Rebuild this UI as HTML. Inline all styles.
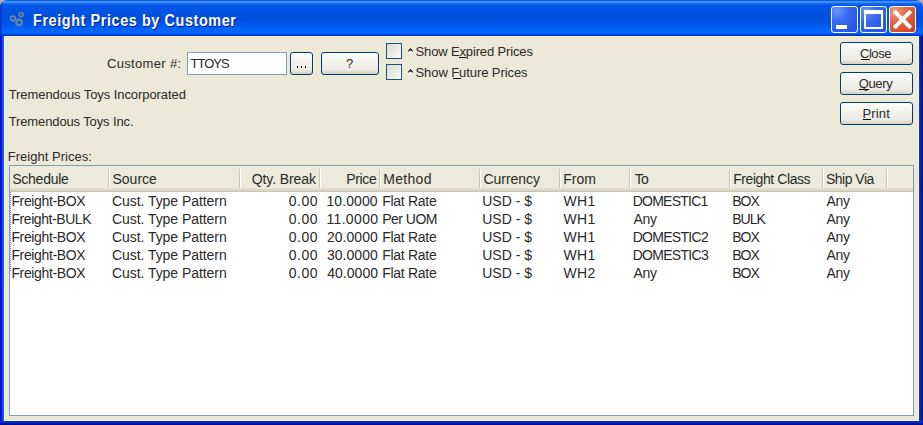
<!DOCTYPE html>
<html><head><meta charset="utf-8">
<style>
*{margin:0;padding:0;box-sizing:border-box}
html,body{width:923px;height:425px;overflow:hidden;background:#b0ad98}
body{position:relative;font-family:"Liberation Sans",sans-serif;color:#2a2a2a}
.a{position:absolute}
.t{position:absolute;white-space:nowrap}
#win{position:absolute;left:0;top:0;width:923px;height:425px;border-radius:7px 7px 0 0;overflow:hidden;background:#ece9d8}
#title{position:absolute;left:0;top:0;width:923px;height:36px;
 background:linear-gradient(to bottom,#0a5ae6 0px,#0a5ae6 1px,#3d90ff 1px,#3d90ff 2px,#3888fa 2px,#3888fa 3px,#1a6cf5 3px,#1a6cf5 4px,#0a60ee 4px,#0a60ee 5px,#0458e8 5px,#0152e0 13px,#0050df 20px,#0055e8 24px,#005cf5 27px,#0064fc 29px,#0066ff 33px,#0060f8 33px,#0060f8 34px,#0048d8 34px,#0048d8 35px,#0038c8 35px,#0038c8 36px)}
#tl{position:absolute;left:0;top:0;width:4px;height:36px;background:linear-gradient(to right,#0020c8,#0040d8 1px,rgba(0,80,224,0) 3px)}
#lf{position:absolute;left:0;top:36px;width:4px;height:389px;background:linear-gradient(to right,#0011d6 0,#0011d6 1px,#0019d9 1px,#0019d9 2px,#1a4ae0 2px,#1a4ae0 3px,#0c5cf0 3px,#0c5cf0 4px)}
#rf{position:absolute;left:919px;top:36px;width:4px;height:389px;background:linear-gradient(to right,#0035e0 0,#0035e0 1px,#0028c8 1px,#0028c8 2px,#0018a0 2px,#0018a0 3px,#001088 3px,#001088 4px)}
#bf{position:absolute;left:0;top:421px;width:923px;height:4px;background:linear-gradient(to bottom,#0035e0 0,#0035e0 1px,#0028c8 1px,#0028c8 2px,#0018a0 2px,#0018a0 3px,#001088 3px,#001088 4px)}
#client{position:absolute;left:4px;top:36px;width:915px;height:385px;background:#ece9d8;border:1px solid #fcf5dc}
.tbtn{position:absolute;top:6px;width:27px;height:27px;border:1px solid #fff;border-radius:3px;
 background:radial-gradient(circle at 20% 15%,#6e98f8 0,#3a6cf0 35%,#2a5de8 70%,#2250e0 100%)}
.btn{position:absolute;border:1px solid #003c74;border-radius:3px;background:linear-gradient(to bottom,#ffffff 0,#f7f7f3 20%,#ecebe5 80%,#e0dcd0 90%,#d6d0c5 100%)}
.cb{position:absolute;left:386px;width:16px;height:16px;border:1px solid #1c5180;background:linear-gradient(135deg,#dcdcd5 0,#eeeee8 60%,#fbfbf8 100%)}
.u{position:absolute;height:1px;background:#000}
#tbl{position:absolute;left:9px;top:165px;width:905px;height:251px;border:1px solid #7f9db9;background:#fff}
#hdr{position:absolute;left:0;top:0;width:903px;height:26px;background:linear-gradient(to bottom,#ebeadb 0,#ebeadb 22px,#e5e2d0 22px,#e5e2d0 23px,#dedbc6 23px,#dedbc6 24px,#d6d2bd 24px,#d6d2bd 25px,#cbc7b4 25px,#cbc7b4 26px)}
.sep{position:absolute;top:3px;width:2px;height:19px;background:linear-gradient(to right,#cac6b2 0,#cac6b2 1px,#fff 1px,#fff 2px)}
.dot{position:absolute;width:1px;height:2px;background:#000}
</style></head><body>
<div id="win">
 <div id="title"></div>
 <div id="tl"></div>
 <div id="client"></div>
 <div id="lf"></div>
 <div id="rf"></div>
 <div id="bf"></div>
 <svg class="a" style="left:6px;top:8px" width="24" height="24" viewBox="6 8 24 24">
  <g fill="none" stroke="#6a8a9e" opacity="0.95">
   <circle cx="12.95" cy="18.4" r="2.3" stroke-width="1.9"/>
   <circle cx="21.1" cy="14.6" r="1.95" stroke-width="1.7"/>
   <circle cx="19.1" cy="22.4" r="2.8" stroke-width="2.1"/>
  </g>
 </svg>
 <div class="tbtn" style="left:831px"><div class="a" style="left:4px;top:18px;width:11px;height:4px;background:#fff"></div></div>
 <div class="tbtn" style="left:860px"><div class="a" style="left:3px;top:3px;width:19px;height:19px;border:2px solid #fff;border-top-width:4px"></div></div>
 <div class="tbtn" style="left:889px;background:radial-gradient(circle at 20% 15%,#ec9a7c 0,#e2664a 40%,#d8502c 75%,#c83a14 100%)">
  <svg class="a" style="left:0;top:0" width="25" height="25" viewBox="0 0 25 25"><g stroke="#fff" stroke-width="4"><line x1="4.2" y1="4.2" x2="20.8" y2="20.8"/><line x1="20.8" y1="4.2" x2="4.2" y2="20.8"/></g></svg>
 </div>

 <div class="a" style="left:187px;top:52px;width:100px;height:23px;border:1px solid #7f9db9;background:#fff"></div>
 <div class="btn" style="left:290px;top:52px;width:23px;height:23px"></div>
 <div class="dot" style="left:297px;top:66px"></div><div class="dot" style="left:301px;top:66px"></div><div class="dot" style="left:305px;top:66px"></div>
 <div class="btn" style="left:321px;top:52px;width:58px;height:23px"></div>
 <div class="cb" style="top:43px"></div>
 <div class="cb" style="top:64px"></div>
 <div class="btn" style="left:840px;top:42px;width:73px;height:23px"></div>
 <div class="btn" style="left:840px;top:72px;width:73px;height:23px"></div>
 <div class="btn" style="left:840px;top:102px;width:73px;height:23px"></div>
 <svg class="a" style="left:408px;top:48px" width="5" height="6" shape-rendering="crispEdges">
  <rect x="2" y="0" width="1" height="1" fill="#383838"/><rect x="1" y="1" width="3" height="1" fill="#282828"/>
  <rect x="0" y="2" width="5" height="1" fill="#484848"/><rect x="2" y="2" width="1" height="1" fill="#686868"/>
  <rect x="0" y="3" width="1" height="1" fill="#8a8a8a"/><rect x="1" y="3" width="3" height="1" fill="#e4e4e4"/><rect x="4" y="3" width="1" height="1" fill="#8a8a8a"/>
  <rect x="0" y="4" width="5" height="1" fill="#fcfcfc"/><rect x="0" y="5" width="5" height="1" fill="#ececec"/>
 </svg>
 <svg class="a" style="left:408px;top:69px" width="5" height="6" shape-rendering="crispEdges">
  <rect x="2" y="0" width="1" height="1" fill="#383838"/><rect x="1" y="1" width="3" height="1" fill="#282828"/>
  <rect x="0" y="2" width="5" height="1" fill="#484848"/><rect x="2" y="2" width="1" height="1" fill="#686868"/>
  <rect x="0" y="3" width="1" height="1" fill="#8a8a8a"/><rect x="1" y="3" width="3" height="1" fill="#e4e4e4"/><rect x="4" y="3" width="1" height="1" fill="#8a8a8a"/>
  <rect x="0" y="4" width="5" height="1" fill="#fcfcfc"/><rect x="0" y="5" width="5" height="1" fill="#ececec"/>
 </svg>
 <div class="u" style="left:459px;top:57px;width:7px"></div>
 <div class="u" style="left:453px;top:78px;width:8px"></div>
 <div class="u" style="left:861px;top:59px;width:9px"></div>
 <div class="u" style="left:859px;top:89px;width:10px"></div>
 <div class="u" style="left:863px;top:119px;width:8px"></div>

 <div id="tbl">
  <div class="a" style="left:0;top:26px;width:1px;height:80px;background:repeating-linear-gradient(to bottom,#8a8a8a 0,#8a8a8a 1px,transparent 1px,transparent 2px)"></div>
  <div id="hdr">
   <div class="sep" style="left:98px"></div>
   <div class="sep" style="left:229px"></div>
   <div class="sep" style="left:309px"></div>
   <div class="sep" style="left:369px"></div>
   <div class="sep" style="left:469px"></div>
   <div class="sep" style="left:549px"></div>
   <div class="sep" style="left:619px"></div>
   <div class="sep" style="left:719px"></div>
   <div class="sep" style="left:812px"></div>
   <div class="sep" style="left:876px"></div>
  </div>
 </div>
<div class="t" style="left:33.3px;top:13px;font-size:16px;line-height:16px;letter-spacing:0.66px;font-weight:bold;transform:scaleX(0.9);transform-origin:0 0;color:#fff;text-shadow:1px 1px 0 #0a1c8c">Freight Prices by Customer</div>
<div class="t" style="left:106.91px;top:57px;font-size:13px;line-height:13px;letter-spacing:0.343px">Customer #:</div>
<div class="t" style="left:190.44px;top:57px;font-size:13px;line-height:13px;letter-spacing:-0.960px">TTOYS</div>
<div class="t" style="left:346.05px;top:57px;font-size:13px;line-height:13px;letter-spacing:0.000px">?</div>
<div class="t" style="left:415.53px;top:45px;font-size:13px;line-height:13px;letter-spacing:-0.139px">Show Expired Prices</div>
<div class="t" style="left:415.53px;top:66px;font-size:13px;line-height:13px;letter-spacing:-0.083px">Show Future Prices</div>
<div class="t" style="left:859.91px;top:47px;font-size:13px;line-height:13px;letter-spacing:-0.411px">Close</div>
<div class="t" style="left:858.64px;top:77px;font-size:13px;line-height:13px;letter-spacing:-0.337px">Query</div>
<div class="t" style="left:862.42px;top:107px;font-size:13px;line-height:13px;letter-spacing:0.168px">Print</div>
<div class="t" style="left:8.74px;top:88px;font-size:13px;line-height:13px;letter-spacing:-0.077px">Tremendous Toys Incorporated</div>
<div class="t" style="left:8.74px;top:115px;font-size:13px;line-height:13px;letter-spacing:-0.126px">Tremendous Toys Inc.</div>
<div class="t" style="left:7.82px;top:150px;font-size:13px;line-height:13px;letter-spacing:0.017px">Freight Prices:</div>
<div class="t" style="left:12.26px;top:172px;font-size:14px;line-height:14px;letter-spacing:-0.254px">Schedule</div>
<div class="t" style="left:112.46px;top:172px;font-size:14px;line-height:14px;letter-spacing:0.004px">Source</div>
<div class="t" style="left:251.81px;top:172px;font-size:14px;line-height:14px;letter-spacing:-0.109px">Qty. Break</div>
<div class="t" style="left:346.35px;top:172px;font-size:14px;line-height:14px;letter-spacing:-0.393px">Price</div>
<div class="t" style="left:383.25px;top:172px;font-size:14px;line-height:14px;letter-spacing:0.302px">Method</div>
<div class="t" style="left:483.55px;top:172px;font-size:14px;line-height:14px;letter-spacing:-0.038px">Currency</div>
<div class="t" style="left:563.25px;top:172px;font-size:14px;line-height:14px;letter-spacing:-0.014px">From</div>
<div class="t" style="left:634.64px;top:172px;font-size:14px;line-height:14px;letter-spacing:-0.627px">To</div>
<div class="t" style="left:733.15px;top:172px;font-size:14px;line-height:14px;letter-spacing:-0.419px">Freight Class</div>
<div class="t" style="left:826.06px;top:172px;font-size:14px;line-height:14px;letter-spacing:-0.527px">Ship Via</div>
<div class="t" style="left:11.45px;top:194px;font-size:14px;line-height:14px;letter-spacing:-0.374px">Freight-BOX</div>
<div class="t" style="left:111.95px;top:194px;font-size:14px;line-height:14px;letter-spacing:-0.052px">Cust. Type Pattern</div>
<div class="t" style="left:288.80px;top:194px;font-size:14px;line-height:14px;letter-spacing:0.516px">0.00</div>
<div class="t" style="left:326.42px;top:194px;font-size:14px;line-height:14px;letter-spacing:0.104px">10.0000</div>
<div class="t" style="left:382.15px;top:194px;font-size:14px;line-height:14px;letter-spacing:-0.284px">Flat Rate</div>
<div class="t" style="left:482.29px;top:194px;font-size:14px;line-height:14px;letter-spacing:-0.023px">USD - $</div>
<div class="t" style="left:563.61px;top:194px;font-size:14px;line-height:14px;letter-spacing:0.251px">WH1</div>
<div class="t" style="left:632.65px;top:194px;font-size:14px;line-height:14px;letter-spacing:-0.750px">DOMESTIC1</div>
<div class="t" style="left:732.35px;top:194px;font-size:14px;line-height:14px;letter-spacing:-1.075px">BOX</div>
<div class="t" style="left:826.58px;top:194px;font-size:14px;line-height:14px;letter-spacing:-0.331px">Any</div>
<div class="t" style="left:11.45px;top:212px;font-size:14px;line-height:14px;letter-spacing:-0.430px">Freight-BULK</div>
<div class="t" style="left:111.95px;top:212px;font-size:14px;line-height:14px;letter-spacing:-0.052px">Cust. Type Pattern</div>
<div class="t" style="left:288.80px;top:212px;font-size:14px;line-height:14px;letter-spacing:0.516px">0.00</div>
<div class="t" style="left:326.42px;top:212px;font-size:14px;line-height:14px;letter-spacing:0.348px">11.0000</div>
<div class="t" style="left:382.15px;top:212px;font-size:14px;line-height:14px;letter-spacing:-0.509px">Per UOM</div>
<div class="t" style="left:482.29px;top:212px;font-size:14px;line-height:14px;letter-spacing:-0.023px">USD - $</div>
<div class="t" style="left:563.61px;top:212px;font-size:14px;line-height:14px;letter-spacing:0.251px">WH1</div>
<div class="t" style="left:633.58px;top:212px;font-size:14px;line-height:14px;letter-spacing:-0.331px">Any</div>
<div class="t" style="left:732.35px;top:212px;font-size:14px;line-height:14px;letter-spacing:-1.066px">BULK</div>
<div class="t" style="left:826.58px;top:212px;font-size:14px;line-height:14px;letter-spacing:-0.331px">Any</div>
<div class="t" style="left:11.45px;top:230px;font-size:14px;line-height:14px;letter-spacing:-0.374px">Freight-BOX</div>
<div class="t" style="left:111.95px;top:230px;font-size:14px;line-height:14px;letter-spacing:-0.052px">Cust. Type Pattern</div>
<div class="t" style="left:288.80px;top:230px;font-size:14px;line-height:14px;letter-spacing:0.516px">0.00</div>
<div class="t" style="left:326.89px;top:230px;font-size:14px;line-height:14px;letter-spacing:0.054px">20.0000</div>
<div class="t" style="left:382.15px;top:230px;font-size:14px;line-height:14px;letter-spacing:-0.284px">Flat Rate</div>
<div class="t" style="left:482.29px;top:230px;font-size:14px;line-height:14px;letter-spacing:-0.023px">USD - $</div>
<div class="t" style="left:563.61px;top:230px;font-size:14px;line-height:14px;letter-spacing:0.251px">WH1</div>
<div class="t" style="left:632.65px;top:230px;font-size:14px;line-height:14px;letter-spacing:-0.700px">DOMESTIC2</div>
<div class="t" style="left:732.35px;top:230px;font-size:14px;line-height:14px;letter-spacing:-1.075px">BOX</div>
<div class="t" style="left:826.58px;top:230px;font-size:14px;line-height:14px;letter-spacing:-0.331px">Any</div>
<div class="t" style="left:11.45px;top:248px;font-size:14px;line-height:14px;letter-spacing:-0.374px">Freight-BOX</div>
<div class="t" style="left:111.95px;top:248px;font-size:14px;line-height:14px;letter-spacing:-0.052px">Cust. Type Pattern</div>
<div class="t" style="left:288.80px;top:248px;font-size:14px;line-height:14px;letter-spacing:0.516px">0.00</div>
<div class="t" style="left:326.88px;top:248px;font-size:14px;line-height:14px;letter-spacing:0.058px">30.0000</div>
<div class="t" style="left:382.15px;top:248px;font-size:14px;line-height:14px;letter-spacing:-0.284px">Flat Rate</div>
<div class="t" style="left:482.29px;top:248px;font-size:14px;line-height:14px;letter-spacing:-0.023px">USD - $</div>
<div class="t" style="left:563.61px;top:248px;font-size:14px;line-height:14px;letter-spacing:0.251px">WH1</div>
<div class="t" style="left:632.65px;top:248px;font-size:14px;line-height:14px;letter-spacing:-0.701px">DOMESTIC3</div>
<div class="t" style="left:732.35px;top:248px;font-size:14px;line-height:14px;letter-spacing:-1.075px">BOX</div>
<div class="t" style="left:826.58px;top:248px;font-size:14px;line-height:14px;letter-spacing:-0.331px">Any</div>
<div class="t" style="left:11.45px;top:266px;font-size:14px;line-height:14px;letter-spacing:-0.374px">Freight-BOX</div>
<div class="t" style="left:111.95px;top:266px;font-size:14px;line-height:14px;letter-spacing:-0.052px">Cust. Type Pattern</div>
<div class="t" style="left:288.80px;top:266px;font-size:14px;line-height:14px;letter-spacing:0.516px">0.00</div>
<div class="t" style="left:327.22px;top:266px;font-size:14px;line-height:14px;letter-spacing:0.037px">40.0000</div>
<div class="t" style="left:382.15px;top:266px;font-size:14px;line-height:14px;letter-spacing:-0.284px">Flat Rate</div>
<div class="t" style="left:482.29px;top:266px;font-size:14px;line-height:14px;letter-spacing:-0.023px">USD - $</div>
<div class="t" style="left:563.61px;top:266px;font-size:14px;line-height:14px;letter-spacing:0.284px">WH2</div>
<div class="t" style="left:633.58px;top:266px;font-size:14px;line-height:14px;letter-spacing:-0.331px">Any</div>
<div class="t" style="left:732.35px;top:266px;font-size:14px;line-height:14px;letter-spacing:-1.075px">BOX</div>
<div class="t" style="left:826.58px;top:266px;font-size:14px;line-height:14px;letter-spacing:-0.331px">Any</div>
</div>
</body></html>
